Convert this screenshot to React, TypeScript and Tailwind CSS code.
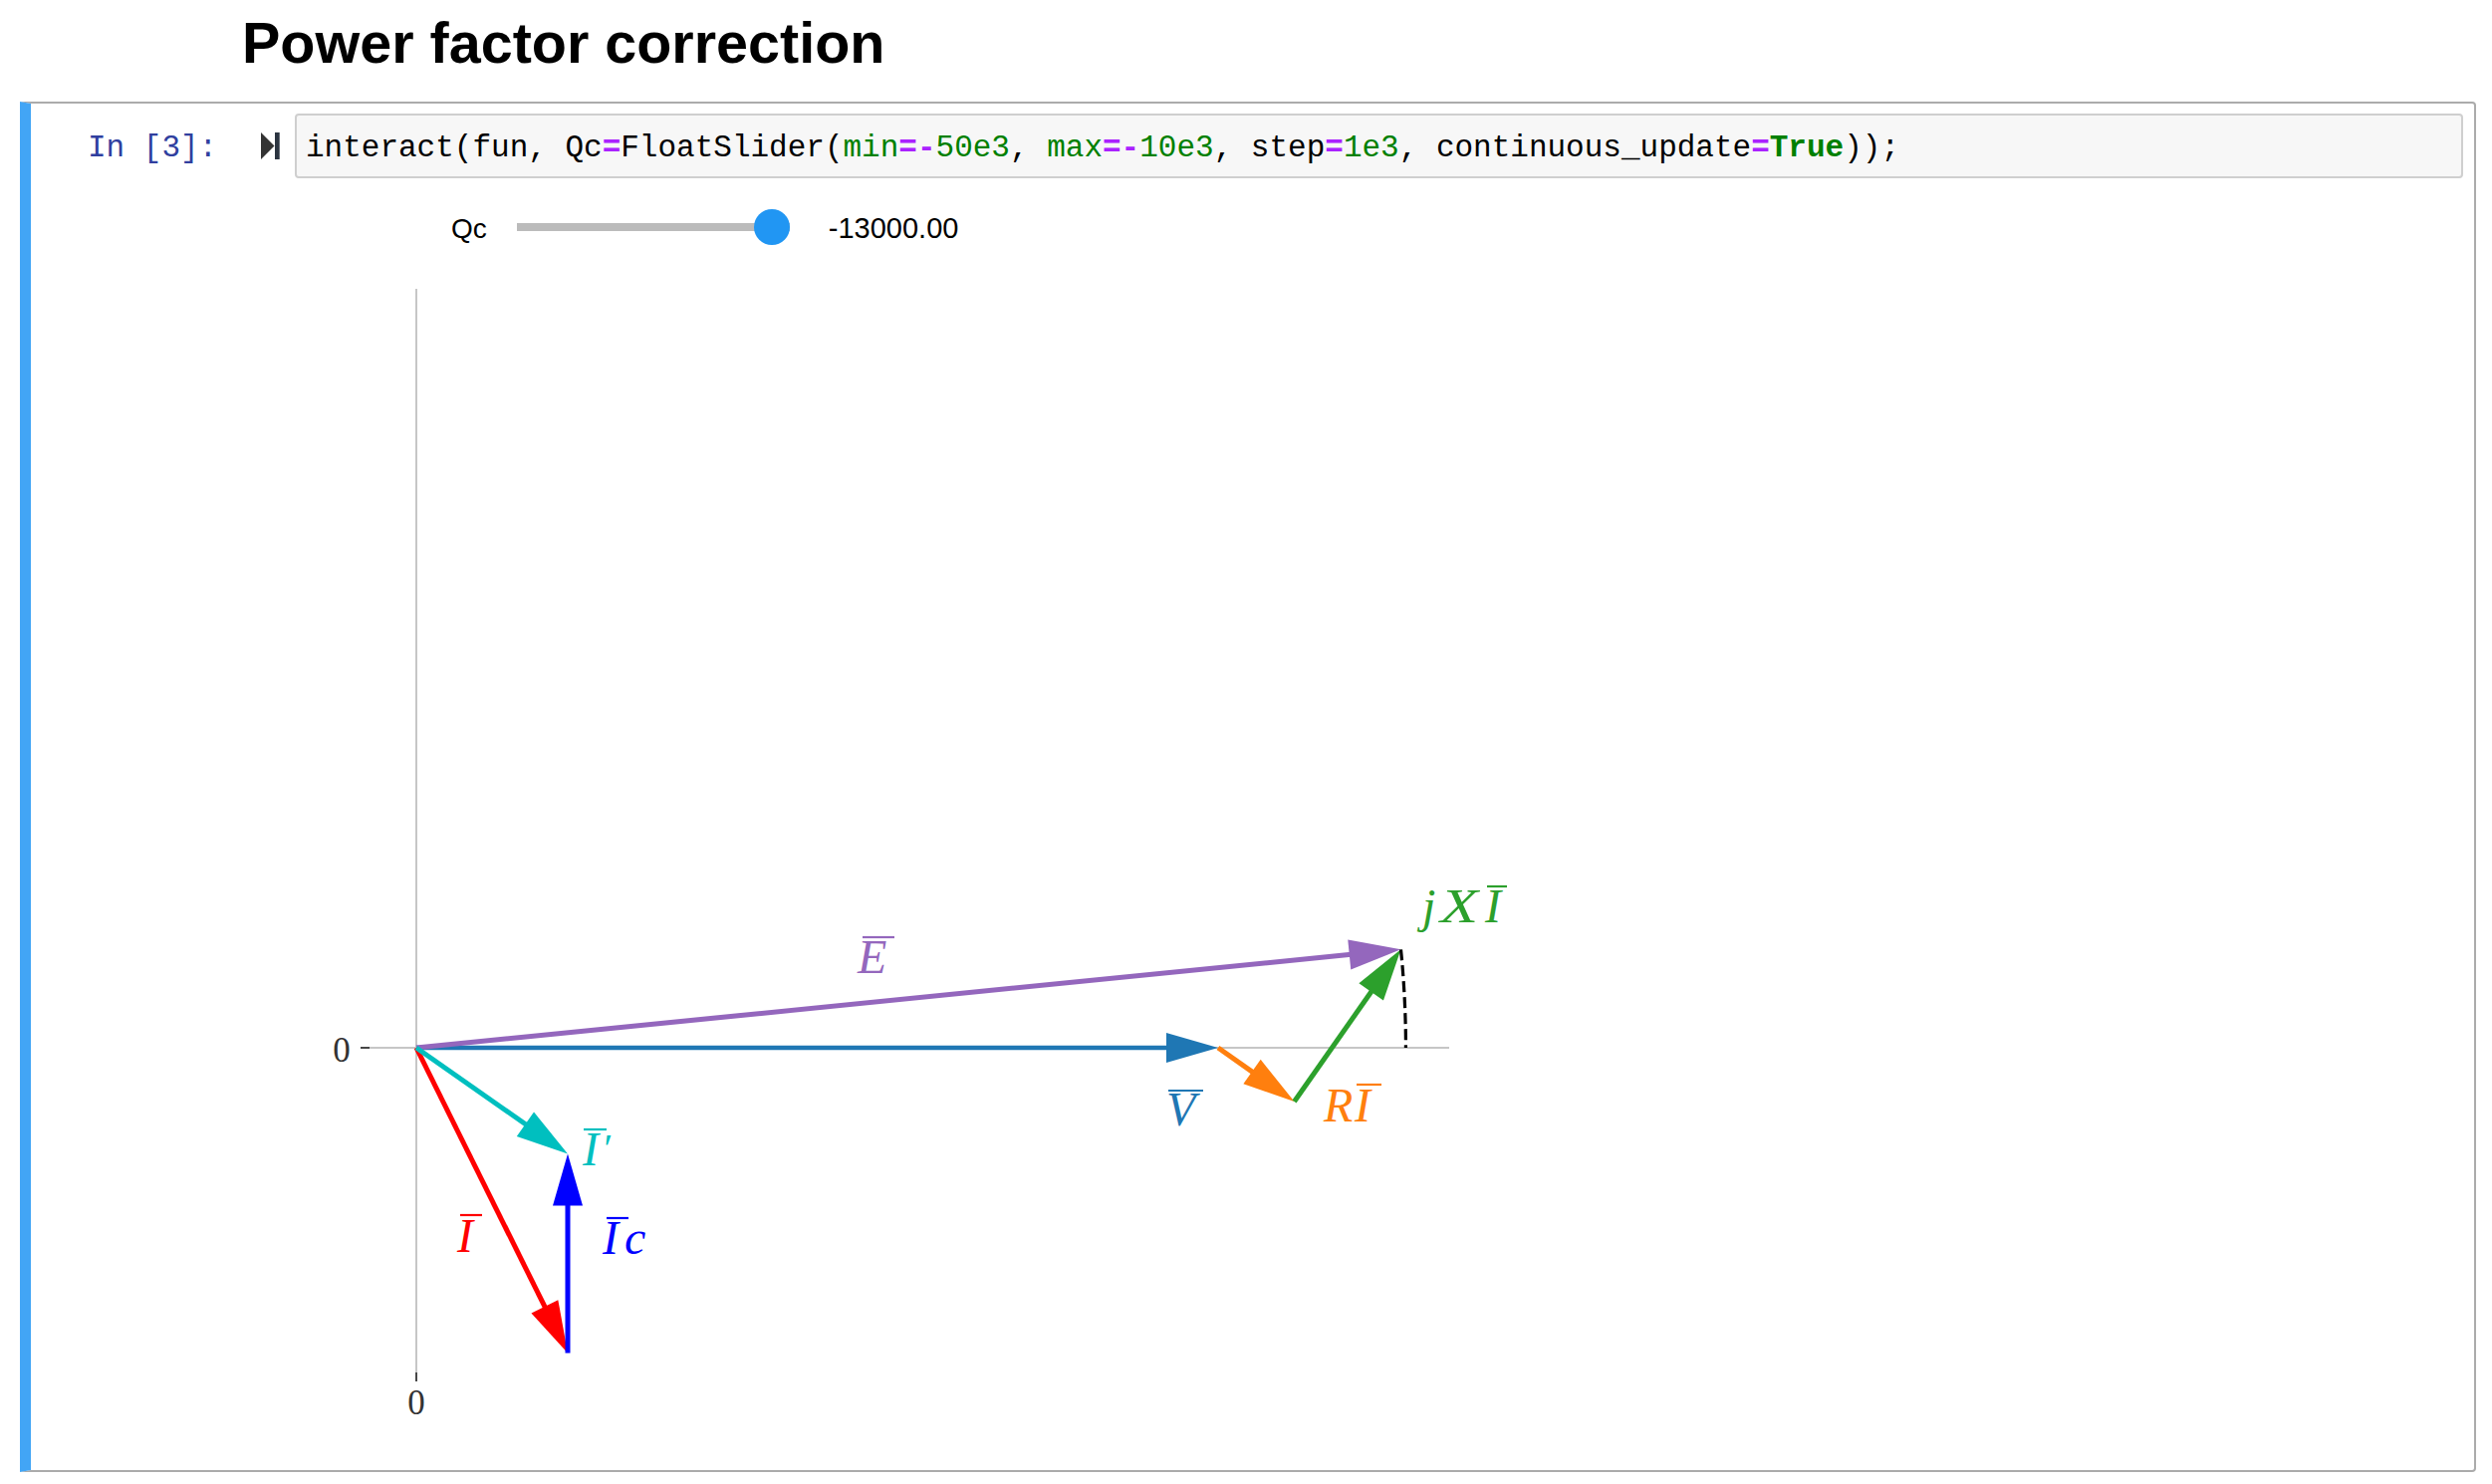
import React from "react";

type Pt = [number, number];

function Arrow({ from, to, color, w = 5 }: { from: Pt; to: Pt; color: string; w?: number }) {
  const [x1, y1] = from;
  const [x2, y2] = to;
  const dx = x2 - x1;
  const dy = y2 - y1;
  const len = Math.hypot(dx, dy);
  const ux = dx / len;
  const uy = dy / len;
  const nx = -uy;
  const ny = ux;
  const L = 52;
  const H = 15;
  const bx = x2 - ux * L;
  const by = y2 - uy * L;
  const pts = `${x2},${y2} ${bx + nx * H},${by + ny * H} ${bx - nx * H},${by - ny * H}`;
  return (
    <g>
      <line x1={x1} y1={y1} x2={bx + ux * 2} y2={by + uy * 2} stroke={color} strokeWidth={w} />
      <polygon points={pts} fill={color} />
    </g>
  );
}

function Bar({ x1, x2, y, color }: { x1: number; x2: number; y: number; color: string }) {
  return <line x1={x1} x2={x2} y1={y} y2={y} stroke={color} strokeWidth={2.2} />;
}

const serif = "'Liberation Serif', 'Times New Roman', serif";

function Chart() {
  const O: Pt = [418, 1052];
  const V: Pt = [1223, 1052];
  const RI: Pt = [1299.5, 1106];
  const E: Pt = [1406.5, 953.3];
  const Ip: Pt = [570, 1158.5];
  const I: Pt = [570, 1358.5];
  const r = Math.hypot(E[0] - O[0], E[1] - O[1]);
  const txt = { fontFamily: serif, fontStyle: "italic" as const, fontSize: 48 };
  return (
    <svg width={1300} height={1200} viewBox="300 260 1300 1200" className="block">
      {/* axes */}
      <line x1={418} x2={418} y1={290} y2={1378} stroke="#c6c6c6" strokeWidth={2} />
      <line x1={418} x2={418} y1={1378} y2={1387} stroke="#333" strokeWidth={1.8} />
      <line x1={371} x2={1455} y1={1052} y2={1052} stroke="#c6c6c6" strokeWidth={2} />
      <line x1={362} x2={371} y1={1052} y2={1052} stroke="#333" strokeWidth={1.8} />
      <text x={343} y={1066} textAnchor="middle" fontFamily={serif} fontSize={35} fill="#333">0</text>
      <text x={418} y={1420} textAnchor="middle" fontFamily={serif} fontSize={35} fill="#333">0</text>

      {/* vectors */}
      <Arrow from={O} to={V} color="#1f77b4" w={4.5} />
      <Arrow from={V} to={RI} color="#ff7f0e" />
      <Arrow from={RI} to={E} color="#2ca02c" />
      <Arrow from={O} to={E} color="#9467bd" />
      <Arrow from={O} to={I} color="#ff0000" />
      <Arrow from={I} to={Ip} color="#0000ff" />
      <Arrow from={O} to={Ip} color="#00bfbf" />
      <path
        d={`M ${E[0]} ${E[1]} A ${r} ${r} 0 0 1 ${O[0] + r} ${O[1]}`}
        fill="none"
        stroke="#000"
        strokeWidth={3.2}
        strokeDasharray="11 5"
      />

      {/* labels */}
      <g fill="#9467bd">
        <text x={861} y={977} {...txt}>E</text>
        <Bar x1={866} x2={898} y={941} color="#9467bd" />
      </g>
      <g fill="#00bfbf">
        <text x={585} y={1170} {...txt}>I</text>
        <text x={604} y={1166} {...txt} fontSize={40}>′</text>
        <Bar x1={586} x2={609} y={1134} color="#00bfbf" />
      </g>
      <g fill="#ff0000">
        <text x={459} y={1257} {...txt}>I</text>
        <Bar x1={462} x2={484} y={1220} color="#ff0000" />
      </g>
      <g fill="#0000ff">
        <text x={605} y={1259} {...txt}>I</text>
        <text x={627} y={1259} {...txt}>c</text>
        <Bar x1={609} x2={631} y={1223} color="#0000ff" />
      </g>
      <g fill="#1f77b4">
        <text x={1171} y={1130} {...txt}>V</text>
        <Bar x1={1173} x2={1208} y={1095} color="#1f77b4" />
      </g>
      <g fill="#ff7f0e">
        <text x={1329} y={1126} {...txt}>R</text>
        <text x={1360} y={1126} {...txt}>I</text>
        <Bar x1={1362} x2={1387} y={1089} color="#ff7f0e" />
      </g>
      <g fill="#2ca02c">
        <text x={1428} y={926} {...txt}>j</text>
        <text x={1446} y={926} {...txt} transform="translate(1446 926) scale(1.3 1) translate(-1446 -926)">X</text>
        <text x={1491} y={926} {...txt}>I</text>
        <Bar x1={1493} x2={1513} y={890} color="#2ca02c" />
      </g>
    </svg>
  );
}

function RunIcon() {
  return (
    <svg width={19} height={27} viewBox="0 0 19 27" className="block">
      <polygon points="0,0 13.5,13.5 0,27" fill="#333" />
      <rect x={14} y={0} width={4.7} height={27} fill="#2b3440" />
    </svg>
  );
}

const P = "text-[#AA22FF] font-bold";
const G = "text-[#008000]";

export default function App() {
  const min = -50000;
  const max = -10000;
  const val = -13000;
  const frac = (val - min) / (max - min);
  const trackW = 274;
  return (
    <div className="w-[2502px] min-h-[1490px] bg-white text-black">
      <h1
        className="pl-[243px] pt-[15px] text-[57.5px] leading-[57.5px] font-bold"
        style={{ fontFamily: "'Liberation Sans', Arial, sans-serif" }}
      >
        Power factor correction
      </h1>

      <div className="ml-[20px] mt-[29px] w-[2466px] border-l-[11px] border-l-[#42A5F5] border-y-2 border-r-2 border-y-[#ababab] border-r-[#ababab] rounded-r-[4px] pt-[10.5px] pb-[16px] pr-[11px] pl-[11px]">
        {/* input row */}
        <div className="flex" style={{ fontFamily: "'Liberation Mono', 'Courier New', monospace" }}>
          <div className="w-[254px] shrink-0 flex items-center pl-[46px] pt-[3px]">
            <span className="text-[31px] text-[#303F9F] whitespace-pre leading-none">In [3]:</span>
            <div className="ml-[44px] -mt-[3px]">
              <RunIcon />
            </div>
          </div>
          <div className="flex-1 h-[65px] border-2 border-[#cfcfcf] rounded-[4px] bg-[#f7f7f7] flex items-center pl-[9px] pt-[4px]">
            <span className="text-[31px] whitespace-pre leading-none">
              interact(fun, Qc<span className={P}>=</span>FloatSlider(<span className={G}>min</span>
              <span className={P}>=-</span>
              <span className={G}>50e3</span>, <span className={G}>max</span>
              <span className={P}>=-</span>
              <span className={G}>10e3</span>, step<span className={P}>=</span>
              <span className={G}>1e3</span>, continuous_update<span className={P}>=</span>
              <span className={`${G} font-bold`}>True</span>));
            </span>
          </div>
        </div>

        {/* output */}
        <div className="pl-[254px]">
          <div
            className="ml-[157px] mt-[31px] h-[36px] flex items-center"
            style={{ fontFamily: "'Liberation Sans', Arial, sans-serif" }}
          >
            <span className="text-[28px] leading-none pt-[3px]">Qc</span>
            <div className="relative ml-[30px] h-[36px] flex items-center" style={{ width: trackW }}>
              <div className="w-full h-[8px] bg-[#bbbbbb]" />
              <div
                className="absolute top-0 w-[36px] h-[36px] rounded-full bg-[#2196F3]"
                style={{ left: frac * trackW - 18 + 3 }}
              />
            </div>
            <span className="ml-[39px] text-[29px] leading-none pt-[3px]">-13000.00</span>
          </div>
          <div className="ml-[4px] mt-[14px]">
            <Chart />
          </div>
        </div>
      </div>
    </div>
  );
}
